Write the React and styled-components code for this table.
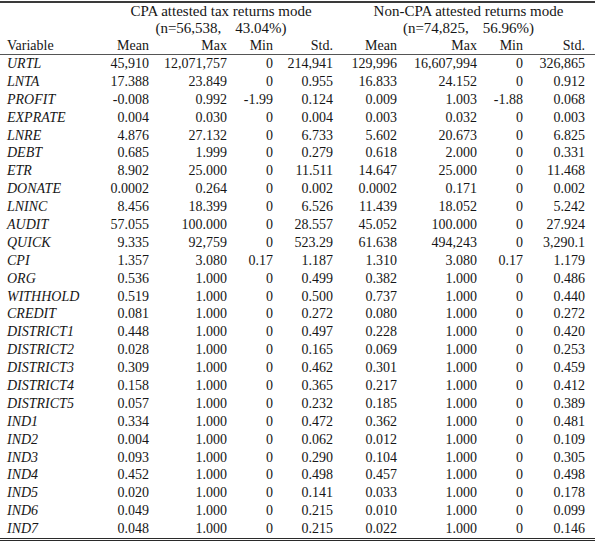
import React from "react";
import styled, { createGlobalStyle } from "styled-components";

const Global = createGlobalStyle`
  html, body { margin: 0; padding: 0; background: #fff; }
  body { font-family: "Liberation Serif", "Times New Roman", serif; color: #161616; }
`;

const COLS = "106px 46px 78px 46px 60px 64px 80px 46px 69px";

const Table = styled.div`
  width: 595px;
  margin-top: 1px;
  border-top: 2px solid #3a3a3a;
  border-bottom: 3px double #2a2a2a;
  font-size: 14px;
`;

const Head = styled.div`
  display: grid;
  grid-template-columns: ${COLS};
  border-bottom: 1px solid #555;
`;

const GroupCell = styled.div`
  grid-column: ${(p) => p.$span};
  grid-row: ${(p) => p.$row};
  text-align: center;
  font-size: 15px;
  line-height: 17px;
  height: 17px;
  white-space: nowrap;
  padding-left: ${(p) => p.$shift || 0}px;
`;

const Gap = styled.span`
  display: inline-block;
  width: ${(p) => p.$w}px;
`;

const HeadCell = styled.div`
  grid-row: 3;
  line-height: 17px;
  height: 17px;
  text-align: ${(p) => (p.$left ? "left" : "right")};
  padding-left: ${(p) => (p.$left ? 7 : 0)}px;
  padding-right: ${(p) => (p.$last ? 10 : p.$left ? 0 : 3)}px;
  white-space: nowrap;
`;

const Body = styled.div`
  display: flex;
  flex-direction: column;
`;

const Row = styled.div`
  display: grid;
  grid-template-columns: ${COLS};
  height: 17.9px;
  line-height: 17.9px;
`;

const VarCell = styled.div`
  font-style: italic;
  padding-left: 7px;
  white-space: nowrap;
`;

const NumCell = styled.div`
  text-align: right;
  padding-right: ${(p) => (p.$last ? 10 : 3)}px;
  white-space: nowrap;
`;

const rows = [
  ["URTL", "45,910", "12,071,757", "0", "214,941", "129,996", "16,607,994", "0", "326,865"],
  ["LNTA", "17.388", "23.849", "0", "0.955", "16.833", "24.152", "0", "0.912"],
  ["PROFIT", "-0.008", "0.992", "-1.99", "0.124", "0.009", "1.003", "-1.88", "0.068"],
  ["EXPRATE", "0.004", "0.030", "0", "0.004", "0.003", "0.032", "0", "0.003"],
  ["LNRE", "4.876", "27.132", "0", "6.733", "5.602", "20.673", "0", "6.825"],
  ["DEBT", "0.685", "1.999", "0", "0.279", "0.618", "2.000", "0", "0.331"],
  ["ETR", "8.902", "25.000", "0", "11.511", "14.647", "25.000", "0", "11.468"],
  ["DONATE", "0.0002", "0.264", "0", "0.002", "0.0002", "0.171", "0", "0.002"],
  ["LNINC", "8.456", "18.399", "0", "6.526", "11.439", "18.052", "0", "5.242"],
  ["AUDIT", "57.055", "100.000", "0", "28.557", "45.052", "100.000", "0", "27.924"],
  ["QUICK", "9.335", "92,759", "0", "523.29", "61.638", "494,243", "0", "3,290.1"],
  ["CPI", "1.357", "3.080", "0.17", "1.187", "1.310", "3.080", "0.17", "1.179"],
  ["ORG", "0.536", "1.000", "0", "0.499", "0.382", "1.000", "0", "0.486"],
  ["WITHHOLD", "0.519", "1.000", "0", "0.500", "0.737", "1.000", "0", "0.440"],
  ["CREDIT", "0.081", "1.000", "0", "0.272", "0.080", "1.000", "0", "0.272"],
  ["DISTRICT1", "0.448", "1.000", "0", "0.497", "0.228", "1.000", "0", "0.420"],
  ["DISTRICT2", "0.028", "1.000", "0", "0.165", "0.069", "1.000", "0", "0.253"],
  ["DISTRICT3", "0.309", "1.000", "0", "0.462", "0.301", "1.000", "0", "0.459"],
  ["DISTRICT4", "0.158", "1.000", "0", "0.365", "0.217", "1.000", "0", "0.412"],
  ["DISTRICT5", "0.057", "1.000", "0", "0.232", "0.185", "1.000", "0", "0.389"],
  ["IND1", "0.334", "1.000", "0", "0.472", "0.362", "1.000", "0", "0.481"],
  ["IND2", "0.004", "1.000", "0", "0.062", "0.012", "1.000", "0", "0.109"],
  ["IND3", "0.093", "1.000", "0", "0.290", "0.104", "1.000", "0", "0.305"],
  ["IND4", "0.452", "1.000", "0", "0.498", "0.457", "1.000", "0", "0.498"],
  ["IND5", "0.020", "1.000", "0", "0.141", "0.033", "1.000", "0", "0.178"],
  ["IND6", "0.049", "1.000", "0", "0.215", "0.010", "1.000", "0", "0.099"],
  ["IND7", "0.048", "1.000", "0", "0.215", "0.022", "1.000", "0", "0.146"],
];

const headers = ["Mean", "Max", "Min", "Std.", "Mean", "Max", "Min", "Std."];

export default function App() {
  return (
    <>
      <Global />
      <Table>
        <Head>
          <GroupCell $span="2 / 6" $row={1}>
            CPA attested tax returns mode
          </GroupCell>
          <GroupCell $span="2 / 6" $row={2}>
            (n=56,538,<Gap $w={14} />43.04%)
          </GroupCell>
          <GroupCell $span="6 / 10" $row={1} $shift={6}>
            Non-CPA attested returns mode
          </GroupCell>
          <GroupCell $span="6 / 10" $row={2} $shift={6}>
            (n=74,825,<Gap $w={14} />56.96%)
          </GroupCell>
          <HeadCell $left>Variable</HeadCell>
          {headers.map((h, i) => (
            <HeadCell key={i} $last={i === headers.length - 1}>
              {h}
            </HeadCell>
          ))}
        </Head>
        <Body>
          {rows.map((r) => (
            <Row key={r[0]}>
              <VarCell>{r[0]}</VarCell>
              {r.slice(1).map((v, i) => (
                <NumCell key={i} $last={i === 7}>
                  {v}
                </NumCell>
              ))}
            </Row>
          ))}
        </Body>
      </Table>
    </>
  );
}
